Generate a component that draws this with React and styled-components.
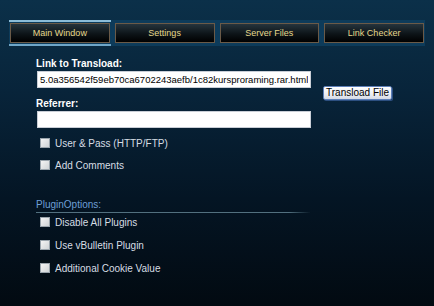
import React from "react";
import styled, { createGlobalStyle } from "styled-components";

const GlobalStyle = createGlobalStyle`
  html, body {
    margin: 0;
    padding: 0;
  }
  body {
    width: 434px;
    height: 306px;
    overflow: hidden;
    background: linear-gradient(180deg, #0b3049 0%, #08243a 30%, #041524 65%, #020a11 100%);
    font-family: "Liberation Sans", Arial, sans-serif;
  }
`;

const tabs = ["Main Window", "Settings", "Server Files", "Link Checker"];

function App() {
  return (
    <Page>
      <GlobalStyle />
      <TabBar>
        {tabs.map((t, i) => (
          <TabSlot key={t} active={i === 0}>
            <Tab>{t}</Tab>
          </TabSlot>
        ))}
      </TabBar>

      <Form>
        <Label>Link to Transload:</Label>
        <LinkRow>
          <TextBox
            readOnly
            value="5.0a356542f59eb70ca6702243aefb/1c82kursproraming.rar.html"
          />
          <Button>Transload File</Button>
        </LinkRow>

        <Label>Referrer:</Label>
        <TextBox readOnly value="" />

        <Options top={10} spacing={12}>
          <Check label="User & Pass (HTTP/FTP)" />
          <Check label="Add Comments" />
        </Options>

        <SectionTitle>PluginOptions:</SectionTitle>
        <Options top={4} spacing={13}>
          <Check label="Disable All Plugins" />
          <Check label="Use vBulletin Plugin" />
          <Check label="Additional Cookie Value" />
        </Options>
      </Form>
    </Page>
  );
}

function Check({ label }) {
  return (
    <CheckRow>
      <Box />
      <span>{label}</span>
    </CheckRow>
  );
}

export default App;

const Page = styled.div`
  padding-top: 20px;
`;

const TabBar = styled.div`
  display: flex;
  gap: 3px;
  margin: 0 9px;
  width: 416px;
  background: #0d3b5a;
`;

const TabSlot = styled.div`
  flex: 1;
  padding: 1px;
  border-top: 2px solid ${(p) => (p.active ? "#8bbcd8" : "transparent")};
  border-bottom: 2px solid ${(p) => (p.active ? "#6fa6c8" : "transparent")};
`;

const Tab = styled.div`
  height: 20px;
  box-sizing: border-box;
  border: 1px solid #6a5a48;
  background: linear-gradient(180deg, #26343d 0%, #0d1418 55%, #000 100%);
  color: #e6d88c;
  font-size: 9px;
  display: flex;
  align-items: center;
  justify-content: center;
`;

const Form = styled.div`
  padding: 12px 0 0 36px;
  display: flex;
  flex-direction: column;
  align-items: flex-start;
`;

const Label = styled.div`
  color: #ffffff;
  font-weight: bold;
  font-size: 10px;
  line-height: 12px;
  margin-bottom: 1px;
`;

const LinkRow = styled.div`
  display: flex;
  align-items: flex-start;
  gap: 12px;
  margin-bottom: 10px;
`;

const TextBox = styled.input`
  width: 274px;
  height: 17px;
  box-sizing: border-box;
  margin: 0 0 0 1px;
  padding: 0 2px;
  border: 1px solid #c9ced6;
  background: #fff;
  color: #000;
  font-family: "Liberation Sans", Arial, sans-serif;
  font-size: 9.5px;
  outline: none;
`;

const Button = styled.button`
  margin: 15px 0 -12px;
  width: 69px;
  height: 14px;
  padding: 0;
  box-sizing: border-box;
  border: 1px solid #5d7fb8;
  border-radius: 2px;
  box-shadow: 1px 1px 0 #2c4f80;
  background: linear-gradient(180deg, #ffffff 0%, #eceef4 60%, #d5dae6 100%);
  color: #000;
  font-family: "Liberation Sans", Arial, sans-serif;
  font-size: 10px;
  line-height: 12px;
`;

const Options = styled.div`
  display: flex;
  flex-direction: column;
  gap: ${(p) => p.spacing}px;
  margin-top: ${(p) => p.top}px;
  padding-left: 4px;
`;

const CheckRow = styled.label`
  display: flex;
  align-items: center;
  gap: 5px;
  height: 10px;
  color: #d6dde4;
  font-size: 10px;
`;

const Box = styled.span`
  width: 8px;
  height: 8px;
  background: linear-gradient(135deg, #f4f4f4, #cfd3d6);
  border: 1px solid #9aa4ac;
`;

const SectionTitle = styled.div`
  margin-top: 29px;
  width: 274px;
  color: #6e9fd6;
  font-size: 10px;
  line-height: 12px;
  padding-bottom: 1px;
  border-bottom: 1px solid;
  border-image: linear-gradient(90deg, #52707f 0%, #52707f 92%, transparent 100%) 1;
`;
